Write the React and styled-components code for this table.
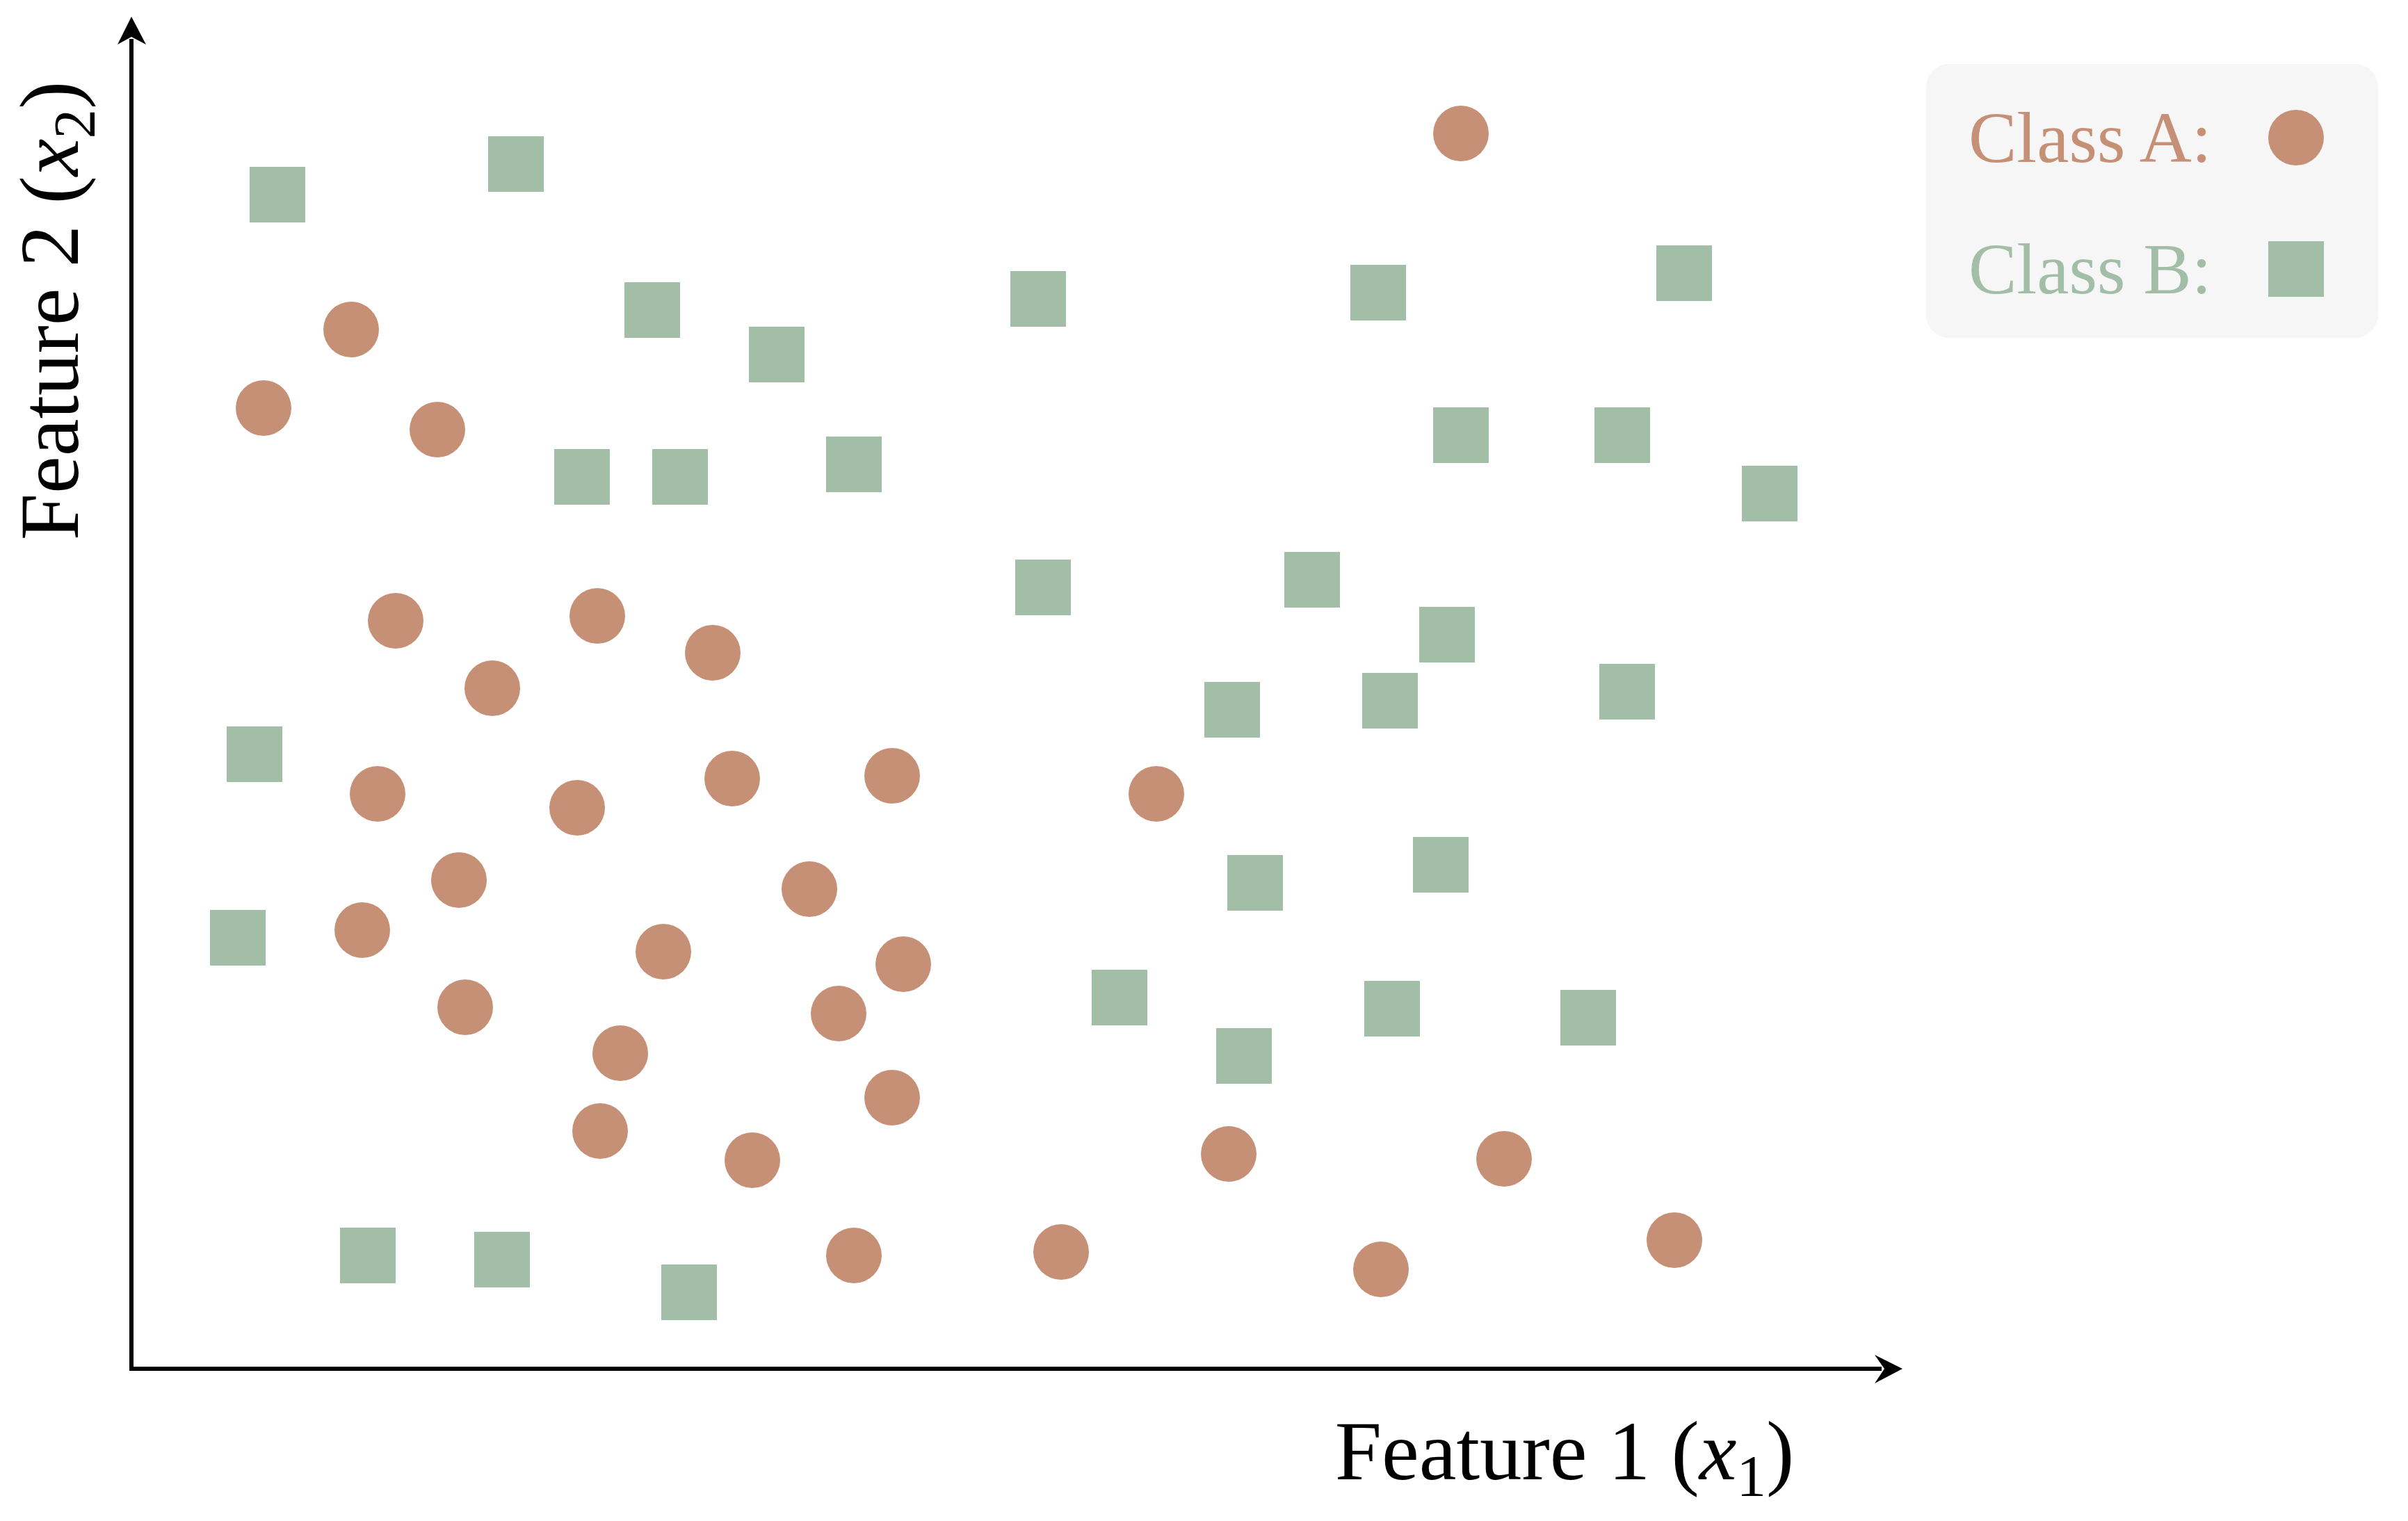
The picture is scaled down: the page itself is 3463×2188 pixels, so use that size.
import React from 'react';
import styled, { createGlobalStyle } from 'styled-components';

const GlobalStyle = createGlobalStyle`
    html, body {
        margin: 0;
        padding: 0;
        background: #ffffff;
        overflow: hidden;
    }
`

const CLASS_A = '#c69076';
const CLASS_B = '#a2bea6';

// point centres, in page pixels
const classA = [
    [2101, 192], [505, 474], [379, 587], [629, 618], [569, 893], [859, 886],
    [1025, 939], [708, 990], [543, 1142], [830, 1162], [1053, 1120], [1283, 1116],
    [1663, 1142], [660, 1266], [1164, 1279], [521, 1338], [954, 1369], [1299, 1387],
    [669, 1449], [1206, 1458], [892, 1515], [1283, 1579], [863, 1627], [1082, 1669],
    [1767, 1660], [2163, 1667], [1228, 1806], [1526, 1801], [1986, 1826], [2408, 1784],
];

const classB = [
    [399, 280], [742, 236], [938, 446], [1117, 510], [1493, 430], [1982, 421],
    [2422, 393], [837, 686], [978, 686], [1228, 668], [2101, 626], [2333, 626],
    [2545, 710], [1500, 845], [1887, 834], [2081, 913], [1772, 1021], [1999, 1008],
    [2340, 995], [366, 1085], [342, 1349], [1805, 1270], [2072, 1244], [1610, 1435],
    [2002, 1451], [1789, 1519], [2284, 1464], [529, 1806], [722, 1812], [991, 1859],
];

const Page = styled.div`
    display: flex;
    align-items: flex-start;
    width: 3463px;
    height: 2188px;
    font-family: "Liberation Serif", "Times New Roman", serif;
`

const Chart = styled.svg`
    display: block;
    flex-shrink: 0;
`

const Axis = styled.line`
    stroke: #000;
    stroke-width: 6;
`

const Arrow = styled.polygon`
    fill: #000;
`

const Dot = styled.circle`
    fill: ${CLASS_A};
`

const Tile = styled.rect`
    fill: ${CLASS_B};
`

const AxisLabel = styled.text`
    font-family: "Liberation Serif", "Times New Roman", serif;
    font-size: 121px;
    fill: #000;

    .var {
        font-style: italic;
    }
`

const Legend = styled.div`
    box-sizing: border-box;
    width: 650px;
    margin-top: 92px;
    padding: 56px 78px 49px 61px;
    background: #f6f6f6;
    border-radius: 33px;
    display: flex;
    flex-direction: column;
    gap: 89px;
`

const LegendRow = styled.div`
    height: 100px;
    display: flex;
    align-items: center;
    justify-content: space-between;
`

const LegendText = styled.span`
    font-size: 104px;
    line-height: 1;
    color: ${props => props.color};
`

const Marker = styled.span`
    display: block;
    width: 80px;
    height: 80px;
    background: ${props => props.color};
    border-radius: ${props => (props.round ? '50%' : '0')};
`

const Subscript = ({ children }) => (
    <>
        <tspan fontSize="85" dy="24">{children}</tspan>
        <tspan dy="-24">)</tspan>
    </>
)

const ScatterPlot = () => (
    <Chart width="2770" height="2188" viewBox="0 0 2770 2188">
        <Axis x1="189" y1="1972" x2="189" y2="56" />
        <Arrow points="189,24 169,64 189,53 210,64" />
        <Axis x1="186" y1="1969" x2="2706" y2="1969" />
        <Arrow points="2736,1969 2696,1949 2710,1969 2696,1990" />

        {classB.map(([x, y], i) => (
            <Tile key={`b${i}`} x={x - 40} y={y - 40} width="80" height="80" />
        ))}
        {classA.map(([x, y], i) => (
            <Dot key={`a${i}`} cx={x} cy={y} r="40" />
        ))}

        <AxisLabel x="2250" y="2128" textAnchor="middle">
            Feature 1 (<tspan className="var">x</tspan>
            <Subscript>1</Subscript>
        </AxisLabel>
        <AxisLabel x="112" y="447" textAnchor="middle" transform="rotate(-90 112 447)">
            Feature 2 (<tspan className="var">x</tspan>
            <Subscript>2</Subscript>
        </AxisLabel>
    </Chart>
)

const App = () => {
    return (
        <Page>
            <GlobalStyle />
            <ScatterPlot />
            <Legend>
                <LegendRow>
                    <LegendText color={CLASS_A}>Class A:</LegendText>
                    <Marker color={CLASS_A} round />
                </LegendRow>
                <LegendRow>
                    <LegendText color={CLASS_B}>Class B:</LegendText>
                    <Marker color={CLASS_B} />
                </LegendRow>
            </Legend>
        </Page>
    )
}

export default App;
